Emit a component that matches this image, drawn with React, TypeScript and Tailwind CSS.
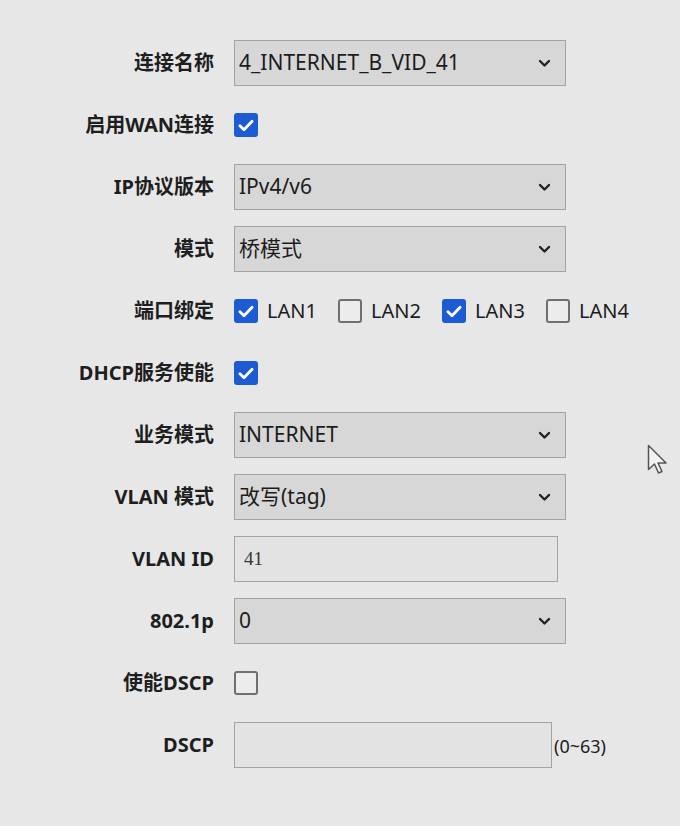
import { ReactNode } from "react";

const font = { fontFamily: '"Noto Sans", "Noto Sans CJK SC", sans-serif' };

function Check({ checked }: { checked: boolean }) {
  if (checked) {
    return (
      <span className="flex h-[24px] w-[24px] shrink-0 items-center justify-center rounded-[3px] bg-[#1d5bd3]">
        <svg width="16" height="13" viewBox="0 0 15 12" fill="none">
          <path d="M1.8 6.2 5.6 10 13.2 2" stroke="white" strokeWidth="2.6" strokeLinecap="round" strokeLinejoin="round" />
        </svg>
      </span>
    );
  }
  return <span className="h-[24px] w-[24px] shrink-0 rounded-[3px] border-2 border-[#707070] bg-[#ececec]" />;
}

function Select({ value }: { value: string }) {
  return (
    <div className="flex h-[46px] w-[332px] items-center justify-between border border-[#a3a3a3] bg-[#d7d7d8] pl-[4px] pr-[14px] text-[21px] text-[#1c1c1c]">
      <span>{value}</span>
      <svg width="13" height="9" viewBox="0 0 13 9" fill="none">
        <path d="M2 2 6.5 6.5 11 2" stroke="#222" strokeWidth="2.4" strokeLinecap="round" strokeLinejoin="round" />
      </svg>
    </div>
  );
}

function Row({ label, children }: { label: string; children: ReactNode }) {
  return (
    <div className="flex h-[46px] items-center gap-[20px]">
      <div className="w-[214px] shrink-0 text-right text-[20px] font-bold text-[#1e1e1e]">{label}</div>
      {children}
    </div>
  );
}

function Lan({ name, checked }: { name: string; checked: boolean }) {
  return (
    <div className="flex w-[104px] items-center gap-[9px]">
      <Check checked={checked} />
      <span className="text-[20px] text-[#1c1c1c]">{name}</span>
    </div>
  );
}

export default function App() {
  return (
    <main style={font} className="relative h-[826px] w-[680px] overflow-hidden bg-[#e7e7e8]">
      <div className="flex flex-col gap-[16px] pt-[40px]">
        <Row label="连接名称">
          <Select value="4_INTERNET_B_VID_41" />
        </Row>
        <Row label="启用WAN连接">
          <Check checked />
        </Row>
        <Row label="IP协议版本">
          <Select value="IPv4/v6" />
        </Row>
        <Row label="模式">
          <Select value="桥模式" />
        </Row>
        <Row label="端口绑定">
          <div className="flex items-center">
            <Lan name="LAN1" checked />
            <Lan name="LAN2" checked={false} />
            <Lan name="LAN3" checked />
            <Lan name="LAN4" checked={false} />
          </div>
        </Row>
        <Row label="DHCP服务使能">
          <Check checked />
        </Row>
        <Row label="业务模式">
          <Select value="INTERNET" />
        </Row>
        <Row label="VLAN 模式">
          <Select value="改写(tag)" />
        </Row>
        <Row label="VLAN ID">
          <div
            style={{ fontFamily: '"Liberation Serif", serif' }}
            className="flex h-[46px] w-[324px] items-center border border-[#a3a3a3] bg-[#e3e3e4] pl-[9px] text-[19px] text-[#2f3a2f]"
          >
            41
          </div>
        </Row>
        <Row label="802.1p">
          <Select value="0" />
        </Row>
        <Row label="使能DSCP">
          <Check checked={false} />
        </Row>
        <Row label="DSCP">
          <div className="flex items-end gap-[2px]">
            <div className="h-[46px] w-[318px] border border-[#a3a3a3] bg-[#e3e3e4]" />
            <span className="pb-[8px] text-[18px] text-[#1c1c1c]">(0~63)</span>
          </div>
        </Row>
      </div>
      <svg className="absolute left-[647px] top-[444px]" width="20" height="32" viewBox="0 0 20 32" fill="none">
        <path d="M1.5 1.5v24l6-5.5 4 9 3.5-1.5-4-8.5h8z" fill="#f2f2f2" stroke="#555" strokeWidth="1.5" strokeLinejoin="round" />
      </svg>
    </main>
  );
}
